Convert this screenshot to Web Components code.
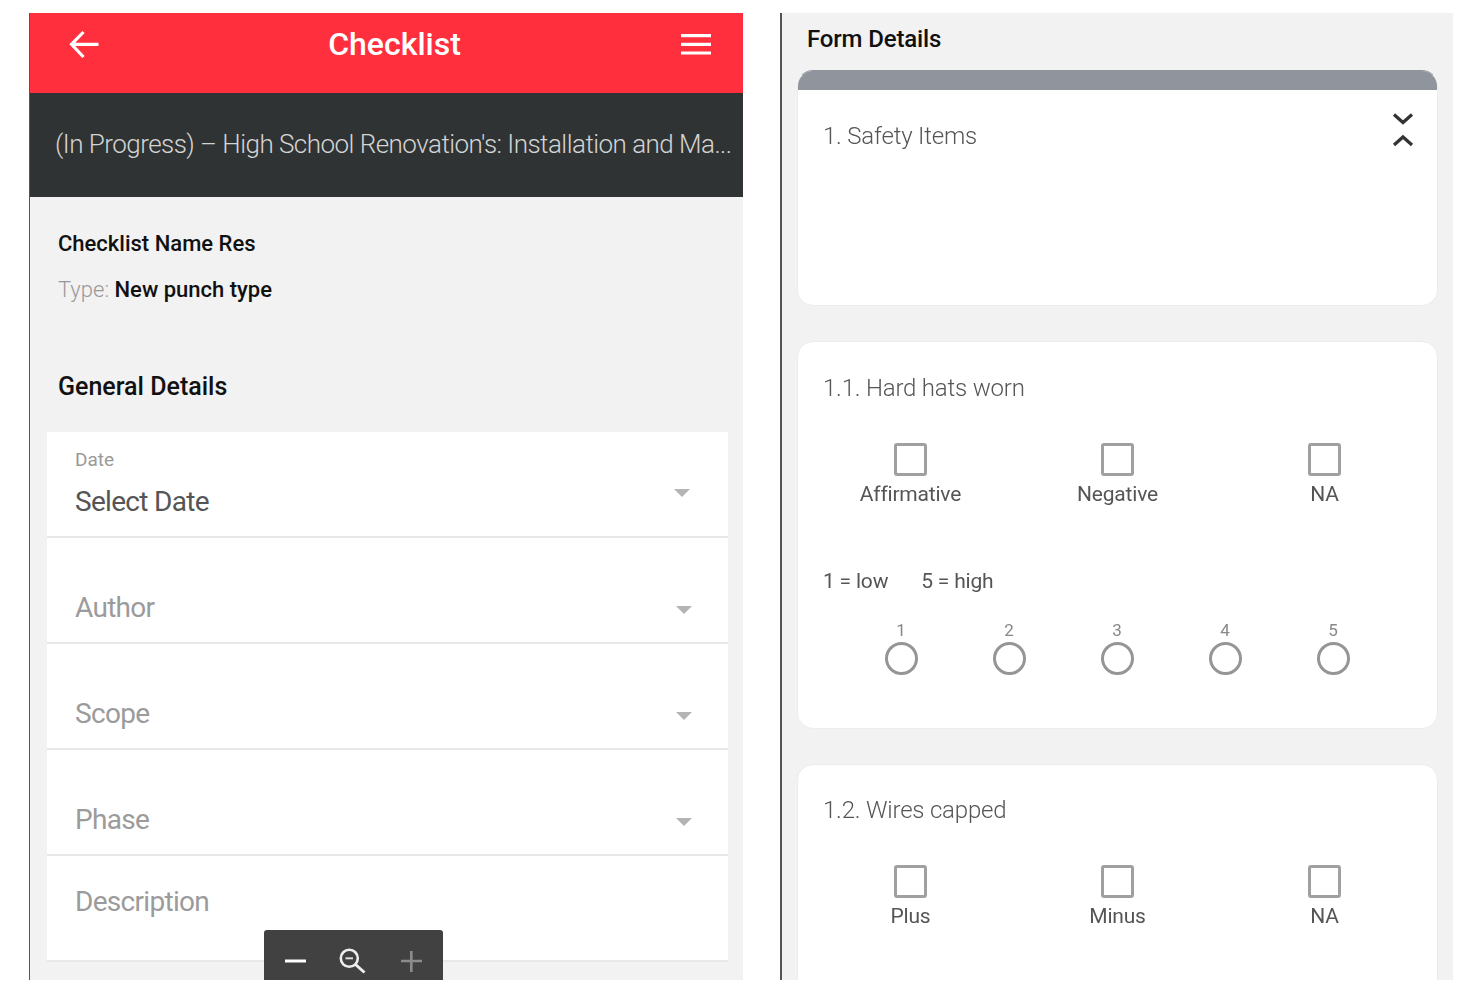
<!DOCTYPE html>
<html>
<head>
<meta charset="utf-8">
<title>Checklist</title>
<style>
    html, body { margin: 0; height: 100%; background: #fff; overflow: hidden; }
    body { font-family: Roboto, "Liberation Sans", sans-serif; }
    .page { display: flex; gap: 37px; height: 967px; padding: 13px 14px 0 29px; filter: blur(.6px); }
</style>
</head>
<body>
<div class="page">
    <checklist-panel>
        <app-header title="Checklist"></app-header>
        <status-bar>(In Progress) – High School Renovation's: Installation and Ma...</status-bar>
        <checklist-info name="Checklist Name Res" type="New punch type"></checklist-info>
        <section-title>General Details</section-title>
        <field-list>
            <select-field label="Date" value="Select Date"></select-field>
            <select-field value="Author"></select-field>
            <select-field value="Scope"></select-field>
            <select-field value="Phase"></select-field>
            <text-field placeholder="Description"></text-field>
        </field-list>
        <zoom-bar></zoom-bar>
    </checklist-panel>

    <form-panel>
        <form-card heading="1. Safety Items" bar toggle style="--card-height: 236px; --title-top: 30px"></form-card>
        <form-card heading="1.1. Hard hats worn" style="--card-height: 388px; --title-top: 30px">
            <check-group options="Affirmative,Negative,NA"></check-group>
            <rating-scale></rating-scale>
        </form-card>
        <form-card heading="1.2. Wires capped" style="--card-height: 387px; --title-top: 29px">
            <check-group options="Plus,Minus,NA"></check-group>
        </form-card>
    </form-panel>
</div>

<script>
function shadow(el, html) {
    el.attachShadow({ mode: "open" });
    el.shadowRoot.innerHTML = html;
}

class ChecklistPanel extends HTMLElement {
    connectedCallback() {
        shadow(this, `
            <style>
                :host { display: flex; flex-direction: column; position: relative; width: 713px; height: 967px;
                    flex: none; overflow: hidden; background: #f2f2f2; border-left: 1px solid #555; }
            </style>
            <slot></slot>`);
    }
}

class AppHeader extends HTMLElement {
    connectedCallback() {
        shadow(this, `
            <style>
                :host { display: flex; align-items: flex-start; justify-content: space-between; height: 80px;
                    background: #ff2f3e; color: #fff; box-sizing: border-box; padding: 0 31px 0 39px; flex: none; }
                svg { display: block; margin-top: 16px; }
                svg.menu { margin-top: 19px; }
                h1 { margin: 11px 0 0 8px; font-size: 32px; line-height: 40px; font-weight: 500; }
            </style>
            <svg width="32" height="30" viewBox="0 0 32 30" fill="none" stroke="#fff" stroke-width="3.2">
                <path d="M29.500 15.300H3M14.500 3 2.500 15.300 14.500 28"/>
            </svg>
            <h1>${this.getAttribute("title")}</h1>
            <svg class="menu" width="32" height="24" viewBox="0 0 32 24" fill="none" stroke="#fff" stroke-width="3.2">
                <path d="M1 3.700h30M1 12.300h30M1 21h30"/>
            </svg>`);
    }
}

class StatusBar extends HTMLElement {
    connectedCallback() {
        shadow(this, `
            <style>
                :host { display: block; height: 104px; flex: none; box-sizing: border-box; background: #303333;
                    color: #d4d4d4; padding: 34px 0 0 25px; font-size: 26px; line-height: 34px; font-weight: 300;
                    letter-spacing: -.53px; white-space: nowrap; overflow: hidden; }
            </style>
            <slot></slot>`);
    }
}

class ChecklistInfo extends HTMLElement {
    connectedCallback() {
        shadow(this, `
            <style>
                :host { display: block; padding: 33px 0 0 28px; height: 147px; box-sizing: border-box; flex: none;
                    font-size: 22px; line-height: 28px; color: #111; font-weight: 500; }
                p { margin: 0 0 18px; }
                span { color: #999; font-weight: 300; }
            </style>
            <p>${this.getAttribute("name")}</p>
            <p><span>Type:</span> ${this.getAttribute("type")}</p>`);
    }
}

class SectionTitle extends HTMLElement {
    connectedCallback() {
        shadow(this, `
            <style>
                :host { display: block; height: 88px; flex: none; padding: 27px 0 0 28px; box-sizing: border-box;
                    font-size: 25px; line-height: 32px; font-weight: 500; color: #111; }
            </style>
            <slot></slot>`);
    }
}

class FieldList extends HTMLElement {
    connectedCallback() {
        shadow(this, `
            <style>
                :host { display: flex; flex-direction: column; margin: 0 15px 0 17px; }
            </style>
            <slot></slot>`);
    }
}

class SelectField extends HTMLElement {
    connectedCallback() {
        const label = this.getAttribute("label");
        const filled = !!label;
        shadow(this, `
            <style>
                :host { display: block; position: relative; height: 106px; box-sizing: border-box; background: #fff;
                    border-bottom: 2px solid #e8e8e8; padding: 15px 0 0 28px; }
                .label { font-size: 19px; line-height: 25px; height: 25px; color: #999; }
                .value { font-size: 28px; line-height: 36px; margin-top: 12px; letter-spacing: -.7px; color: ${filled ? "#555" : "#9b9b9b"}; }
                i { position: absolute; right: ${filled ? 38 : 36}px; top: ${filled ? 57 : 68}px; width: 0; height: 0;
                    border-left: 8px solid transparent; border-right: 8px solid transparent; border-top: 8px solid #b4b4b4; }
            </style>
            <div class="label">${label || ""}</div>
            <div class="value">${this.getAttribute("value")}</div>
            <i></i>`);
    }
}

class TextField extends HTMLElement {
    connectedCallback() {
        shadow(this, `
            <style>
                :host { display: block; height: 106px; box-sizing: border-box; background: #fff; letter-spacing: -.7px;
                    border-bottom: 2px solid #e8e8e8; padding: 28px 0 0 28px; font-size: 28px; line-height: 36px; color: #9b9b9b; }
            </style>
            ${this.getAttribute("placeholder")}`);
    }
}

class ZoomBar extends HTMLElement {
    connectedCallback() {
        shadow(this, `
            <style>
                :host { position: absolute; left: 234px; bottom: 0; width: 179px; height: 50px; background: #414141;
                    border-radius: 3px 3px 0 0; }
                svg { display: block; }
            </style>
            <svg width="179" height="50" viewBox="0 0 179 50" fill="none">
                <path d="M21 31h21" stroke="#fff" stroke-width="3"/>
                <circle cx="85.300" cy="28.300" r="8.500" stroke="#eee" stroke-width="2.600"/>
                <path d="M81.500 28.300h7.500" stroke="#ddd" stroke-width="2"/>
                <path d="M91.500 34.500l9 8" stroke="#eee" stroke-width="3"/>
                <path d="M137 31h21M147.300 21v21" stroke="#8c8c8c" stroke-width="2.600"/>
            </svg>`);
    }
}

class FormPanel extends HTMLElement {
    connectedCallback() {
        shadow(this, `
            <style>
                :host { display: flex; flex-direction: column; width: 673px; height: 967px; flex: none; box-sizing: border-box;
                    overflow: hidden; background: #f2f2f2; border-left: 2px solid #555; padding: 0 15px 0 15px; }
                h2 { margin: 0 0 17px 10px; padding-top: 11px; height: 29px; font-size: 24px; line-height: 30px; font-weight: 500;
                    letter-spacing: -.15px; color: #111; }
                .cards { display: flex; flex-direction: column; gap: 35px; }
            </style>
            <h2>Form Details</h2>
            <div class="cards"><slot></slot></div>`);
    }
}

class FormCard extends HTMLElement {
    connectedCallback() {
        const hasBar = this.hasAttribute("bar");
        const toggle = this.hasAttribute("toggle") ? `
            <svg class="toggle" width="22" height="38" viewBox="0 0 22 38" fill="none" stroke="#333" stroke-width="3.200">
                <path d="M2 2.500l9 8 9-8M2 33l9-8 9 8"/>
            </svg>` : "";
        shadow(this, `
            <style>
                :host { display: block; position: relative; flex: none; height: var(--card-height); box-sizing: border-box;
                    background: #fff; border: 1px solid #ececec; border-radius: 16px; overflow: hidden; }
                :host([bar]) { border-top-color: #8f949d; }
                .bar { height: 19px; background: #8f949d; }
                h3 { margin: 0; padding: var(--title-top) 0 0 25px; font-size: 24px; line-height: 32px; font-weight: 300;
                    letter-spacing: -.2px; color: #555; }
                .toggle { position: absolute; right: 23px; top: 41px; }
            </style>
            ${hasBar ? '<div class="bar"></div>' : ""}
            <h3>${this.getAttribute("heading")}</h3>
            ${toggle}
            <slot></slot>`);
    }
}

class CheckGroup extends HTMLElement {
    connectedCallback() {
        const items = this.getAttribute("options").split(",");
        shadow(this, `
            <style>
                :host { display: grid; grid-template-columns: repeat(3, 207px); padding: 39px 0 0 9px; }
                div { display: flex; flex-direction: column; align-items: center; font-size: 21px; line-height: 28px;
                    letter-spacing: -.2px; color: #555; }
                i { display: block; width: 33px; height: 33px; box-sizing: border-box; border: 3px solid #a0a0a0; border-radius: 3px; margin-bottom: 4px; }
            </style>
            ${items.map(item => `<div><i></i>${item}</div>`).join("")}`);
    }
}

class RatingScale extends HTMLElement {
    connectedCallback() {
        const steps = [1, 2, 3, 4, 5];
        shadow(this, `
            <style>
                :host { display: block; padding: 59px 0 0 25px; }
                p { margin: 0; display: flex; gap: 33px; font-size: 21px; line-height: 28px; letter-spacing: -.2px; color: #555; }
                .steps { display: grid; grid-template-columns: repeat(5, 108px); margin: 25px 0 0 24px; }
                .step { display: flex; flex-direction: column; align-items: center; font-size: 17px; line-height: 20px; color: #888; }
                i { display: block; width: 33px; height: 33px; box-sizing: border-box; border: 3px solid #959595; border-radius: 50%; margin-top: 2px; }
            </style>
            <p><span>1 = low</span><span>5 = high</span></p>
            <div class="steps">${steps.map(n => `<div class="step">${n}<i></i></div>`).join("")}</div>`);
    }
}

customElements.define("checklist-panel", ChecklistPanel);
customElements.define("app-header", AppHeader);
customElements.define("status-bar", StatusBar);
customElements.define("checklist-info", ChecklistInfo);
customElements.define("section-title", SectionTitle);
customElements.define("field-list", FieldList);
customElements.define("select-field", SelectField);
customElements.define("text-field", TextField);
customElements.define("zoom-bar", ZoomBar);
customElements.define("form-panel", FormPanel);
customElements.define("form-card", FormCard);
customElements.define("check-group", CheckGroup);
customElements.define("rating-scale", RatingScale);
</script>
</body>
</html>
